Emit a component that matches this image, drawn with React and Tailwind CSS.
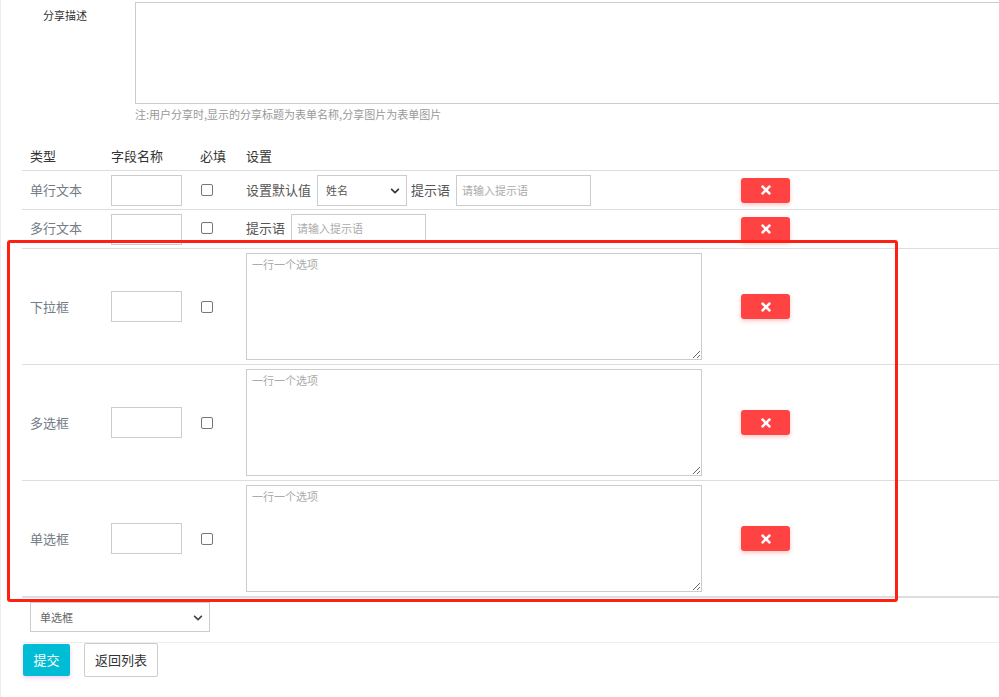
import React from "react";
import { FaTimes, FaChevronDown } from "react-icons/fa";

const font = { fontFamily: '"Noto Sans CJK SC", "Noto Sans", sans-serif' };

const DeleteBtn = () => (
  <button className="w-[49px] h-[25px] rounded-[3px] bg-[#ff4343] text-white flex items-center justify-center shadow-[0_2px_4px_rgba(255,67,67,0.3)]">
    <FaTimes size={14} />
  </button>
);

const Check = () => (
  <span className="block w-[12px] h-[12px] border border-[#767676] rounded-[2px] bg-white" />
);

const NameInput = () => (
  <input className="w-[71px] h-[31px] border border-[#ccc] outline-none px-2 text-[12px]" />
);

const OptionsRow = ({ label }) => (
  <div className="grid grid-cols-[81px_89px_46px_495px_1fr] border-t border-[#ddd] h-[116px] items-center">
    <div className="pl-2 text-[13px] text-[#747c86]">{label}</div>
    <div className="pl-2">
      <NameInput />
    </div>
    <div className="pl-[9px]">
      <Check />
    </div>
    <div className="pl-2">
      <textarea
        placeholder="一行一个选项"
        className="block w-[456px] h-[107px] border border-[#ccc] px-[5px] py-[2px] text-[11px] outline-none placeholder:text-[#aaa]"
      />
    </div>
    <div className="pl-2">
      <DeleteBtn />
    </div>
  </div>
);

export default function App() {
  return (
    <div
      className="relative w-[999px] h-[697px] overflow-hidden bg-white border-l border-[#eee] text-[#333]"
      style={font}
    >
      {/* 分享描述 */}
      <div className="flex">
        <div className="w-[134px] shrink-0 pl-[42px] pt-[7px] text-[11px] text-[#333]">分享描述</div>
        <div className="pt-[2px] shrink-0">
          <textarea className="block w-[900px] h-[102px] border border-[#ccc] outline-none resize-none" />
          <div className="mt-[2px] text-[11px] text-[#999] leading-[16px]">
            注:用户分享时,显示的分享标题为表单名称,分享图片为表单图片
          </div>
        </div>
      </div>

      {/* 字段表 */}
      <div className="ml-[21px] mt-[19px]">
        <div className="grid grid-cols-[81px_89px_46px_495px_1fr] h-[29px] items-center text-[13px] text-[#333]">
          <div className="pl-2">类型</div>
          <div className="pl-2">字段名称</div>
          <div className="pl-2">必填</div>
          <div className="pl-2">设置</div>
          <div />
        </div>

        <div className="grid grid-cols-[81px_89px_46px_495px_1fr] border-t border-[#ddd] h-[39px] items-center">
          <div className="pl-2 text-[13px] text-[#747c86]">单行文本</div>
          <div className="pl-2">
            <NameInput />
          </div>
          <div className="pl-[9px]">
            <Check />
          </div>
          <div className="pl-2 flex items-center text-[13px] text-[#555]">
            <span>设置默认值</span>
            <div className="ml-[6px] relative w-[90px] h-[31px] border border-[#ccc] flex items-center pl-[8px] text-[11px] text-[#555]">
              姓名
              <FaChevronDown size={10} className="absolute right-[6px] top-[10px] text-[#333]" />
            </div>
            <span className="ml-[4px]">提示语</span>
            <input
              placeholder="请输入提示语"
              className="ml-[6px] w-[135px] h-[31px] border border-[#ccc] px-[5px] text-[11px] outline-none placeholder:text-[#aaa]"
            />
          </div>
          <div className="pl-2">
            <DeleteBtn />
          </div>
        </div>

        <div className="grid grid-cols-[81px_89px_46px_495px_1fr] border-t border-[#ddd] h-[39px] items-center">
          <div className="pl-2 text-[13px] text-[#747c86] -mt-[2px]">多行文本</div>
          <div className="pl-2">
            <NameInput />
          </div>
          <div className="pl-[9px] -mt-[2px]">
            <Check />
          </div>
          <div className="pl-2 flex items-center text-[13px] text-[#555] -mt-[2px]">
            <span>提示语</span>
            <input
              placeholder="请输入提示语"
              className="ml-[6px] w-[135px] h-[29px] border border-[#ccc] px-[5px] text-[11px] outline-none placeholder:text-[#aaa]"
            />
          </div>
          <div className="pl-2">
            <DeleteBtn />
          </div>
        </div>

        <OptionsRow label="下拉框" />
        <OptionsRow label="多选框" />
        <OptionsRow label="单选框" />
        <div className="border-t-2 border-[#ddd]" />
      </div>

      {/* 添加类型 */}
      <div className="ml-[29px] mt-[4px] relative w-[180px] h-[30px] border border-[#ccc] flex items-center pl-[9px] text-[11px] text-[#666]">
        单选框
        <FaChevronDown size={10} className="absolute right-[6px] top-[10px] text-[#444]" />
      </div>

      <div className="ml-[21px] mt-[10px] border-t border-[#eee]" />

      <div className="flex items-start ml-[22px] mt-[1px]">
        <button className="w-[47px] h-[32px] rounded-[2px] bg-[#00bcd4] text-white text-[13px] shadow-[0_2px_4px_rgba(180,80,220,0.25)]">
          提交
        </button>
        <button className="ml-[14px] -mt-[1px] w-[74px] h-[34px] border border-[#ccc] rounded-[2px] bg-white text-[13px] text-[#333]">
          返回列表
        </button>
      </div>

      {/* 标注框 */}
      <div className="absolute left-[6px] top-[240px] w-[891px] h-[362px] border-[3px] border-[#ff2014] rounded-[3px] pointer-events-none" />
    </div>
  );
}
